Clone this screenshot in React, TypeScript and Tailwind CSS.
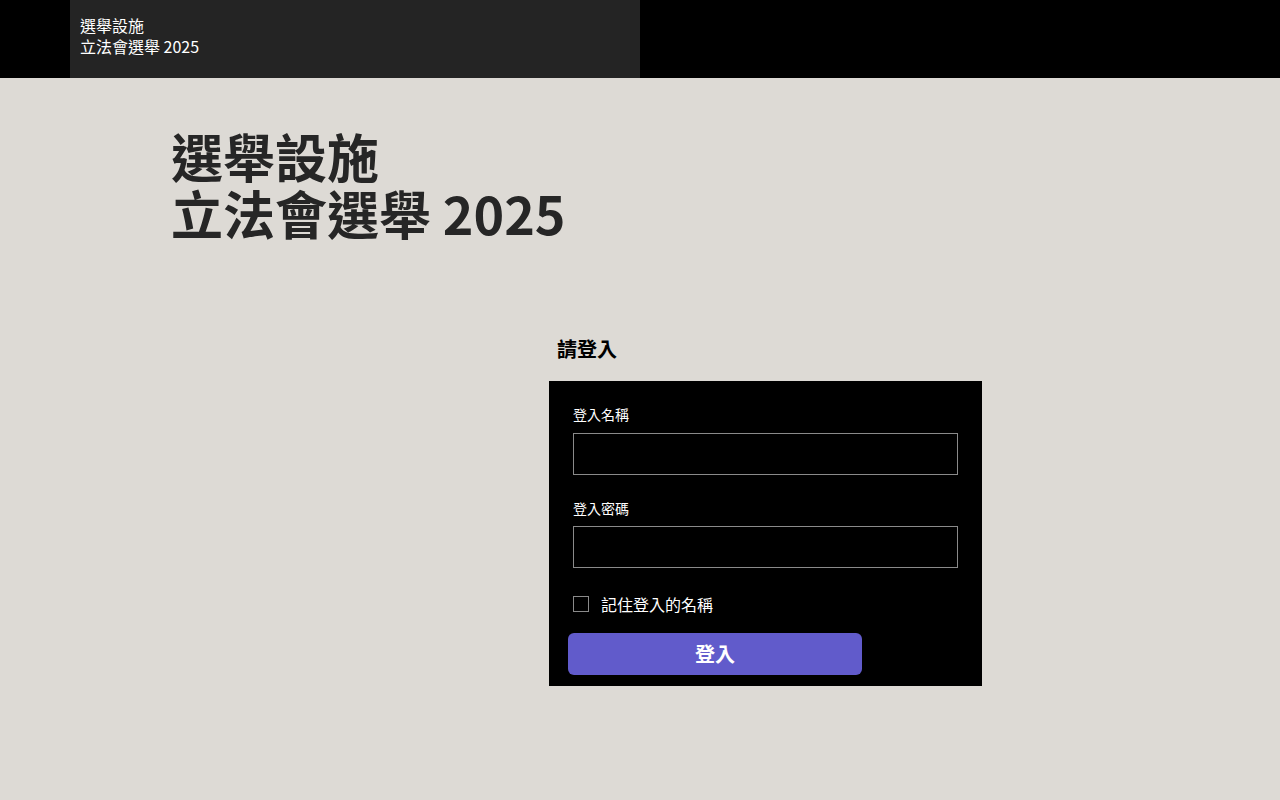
export default function App() {
  return (
    <div className="min-h-screen w-full bg-[#dddad5] font-['Noto_Sans_CJK_TC','Noto_Sans',sans-serif]">
      <header className="h-[78px] w-full bg-black">
        <div className="ml-[70px] flex h-full w-[570px] flex-col bg-[#242424] px-[10px] pt-[15px] text-[16px] leading-[21px] text-white">
          <span>選舉設施</span>
          <span>立法會選舉 2025</span>
        </div>
      </header>

      <main>
        <h1 className="ml-[171px] mt-[49px] flex flex-col text-[52px] font-bold leading-[57px] text-[#262626]">
          <span>選舉設施</span>
          <span>立法會選舉 2025</span>
        </h1>

        <section className="ml-[549px] mt-[94px] w-[433px]">
          <h2 className="pl-[8px] text-[20px] font-bold leading-[28px] text-black">請登入</h2>

          <form className="mt-[18px] flex h-[305px] flex-col bg-black px-[24px] pt-[23px] text-white">
            <label className="text-[14px] leading-[20px]">登入名稱</label>
            <input
              type="text"
              className="mt-[9px] h-[42px] w-[385px] border border-[#8a8a8a] bg-black px-2 text-white outline-none"
            />

            <label className="mt-[23px] text-[14px] leading-[20px]">登入密碼</label>
            <input
              type="password"
              className="mt-[8px] h-[42px] w-[385px] border border-[#8a8a8a] bg-black px-2 text-white outline-none"
            />

            <div className="mt-[24px] flex items-center gap-[12px]">
              <span className="h-[16px] w-[16px] border border-[#8a8a8a] bg-black" />
              <span className="text-[16px] leading-[24px]">記住登入的名稱</span>
            </div>

            <button
              type="button"
              className="-ml-[5px] mt-[17px] h-[42px] w-[294px] rounded-[6px] bg-[#615bcb] text-[20px] font-bold text-white"
            >
              登入
            </button>
          </form>
        </section>
      </main>
    </div>
  );
}
